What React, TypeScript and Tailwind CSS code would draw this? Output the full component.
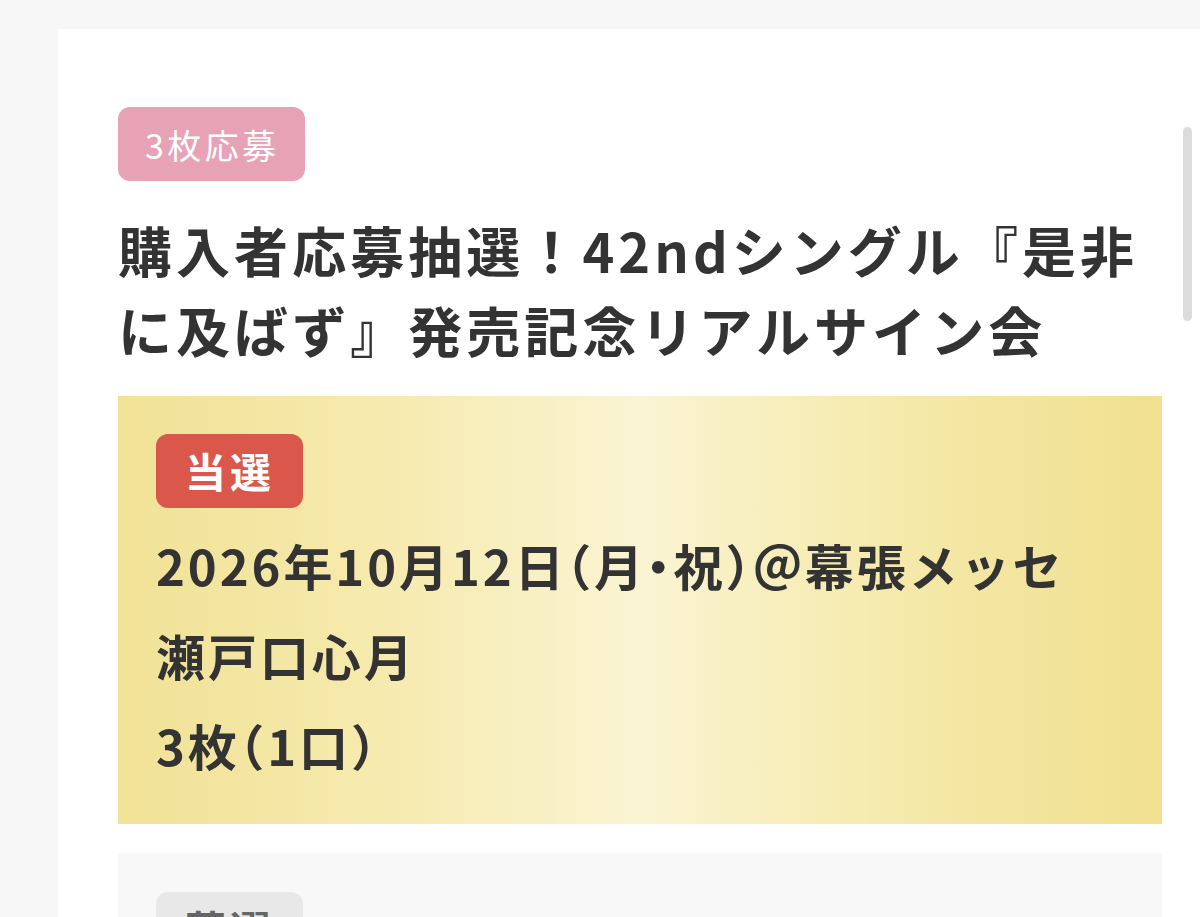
import React from 'react';

const font = { fontFamily: '"Noto Sans CJK JP", "Noto Sans", sans-serif' };

// half-width punctuation like the reference's proportional font
const P: React.FC<{ children: React.ReactNode }> = ({ children }) => (
    <span style={{ fontFeatureSettings: '"halt"' }}>{children}</span>
);

const ResultLine: React.FC<{ children: React.ReactNode }> = ({ children }) => (
    <p className="text-[49px] leading-[90px] font-bold text-[#333333] tracking-[0.06em]">{children}</p>
);

export default function App() {
    return (
        <div style={font} className="relative min-h-[917px] bg-[#f7f7f7] pt-[29px] pl-[58px] overflow-hidden">
            <div className="bg-white pt-[78px] pl-[60px] pr-[38px] pb-[60px]">
                <div className="flex">
                    <span className="inline-flex items-center h-[74px] pl-[27px] pr-[26px] rounded-[12px] bg-[#e8a2b5] text-white text-[34px] tracking-[0.1em]">
                        3枚応募
                    </span>
                </div>
                <h1 className="mt-[29px] text-[54px] leading-[80px] font-bold text-[#333333] tracking-[0.075em]">
                    購入者応募抽選！42ndシングル『是非に及ばず』発売記念リアルサイン会
                </h1>

                <div className="mt-[26px] pt-[38px] pl-[38px] pr-[38px] pb-[34px] bg-[linear-gradient(90deg,#f1e296_0%,#f6eaae_25%,#faf4d2_50%,#f5e9aa_75%,#f0e08f_100%)]">
                    <div className="flex">
                        <span className="inline-flex items-center h-[74px] pl-[29px] pr-[28px] rounded-[12px] bg-[#d9574b] text-white text-[41px] font-bold tracking-[0.1em]">
                            当選
                        </span>
                    </div>
                    <div className="mt-[12px]">
                        <ResultLine>2026年10月12日<P>（</P>月<P>・</P>祝<P>）</P>＠幕張メッセ</ResultLine>
                        <ResultLine>瀬戸口心月</ResultLine>
                        <ResultLine>3枚<P>（</P>1口<P>）</P></ResultLine>
                    </div>
                </div>

                <div className="mt-[29px] pt-[39px] pl-[38px] pb-[40px] bg-[#f8f8f8]">
                    <div className="flex">
                        <span className="inline-flex items-center h-[74px] pl-[29px] pr-[28px] rounded-[12px] bg-[#e8e8e8] text-[#666666] text-[41px] font-bold tracking-[0.1em]">
                            落選
                        </span>
                    </div>
                </div>
            </div>

            <div className="absolute left-[1183px] top-[127px] w-[9px] h-[194px] rounded-full bg-[#dcdcdc]" />
        </div>
    );
}
